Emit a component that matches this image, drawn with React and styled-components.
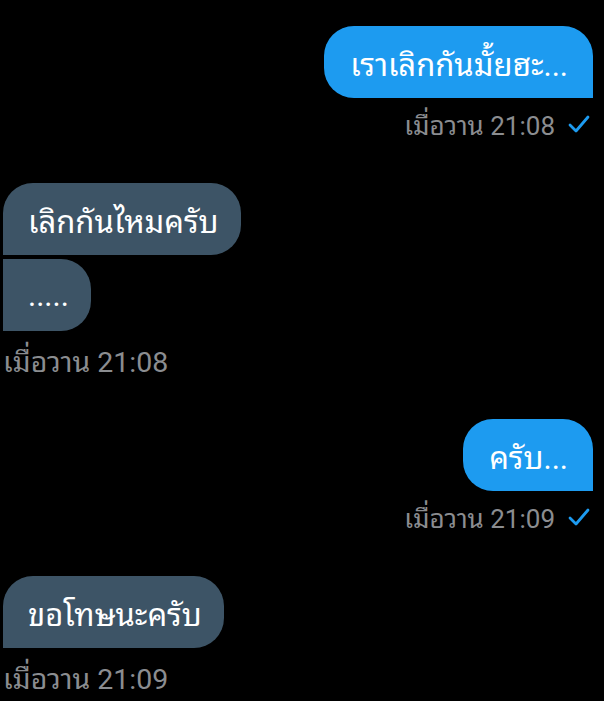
import styled, { createGlobalStyle } from 'styled-components'

const Global = createGlobalStyle`
  html, body {
    margin: 0;
    background: #000;
  }
  body {
    font-family: Roboto, "Noto Sans Thai Looped", "Noto Sans Thai UI", Loma, Garuda, "Noto Sans", sans-serif;
    -webkit-font-smoothing: antialiased;
  }
`

const messages = [
  { id: 1, mine: true, texts: ['เราเลิกกันมั้ยฮะ...'], time: 'เมื่อวาน 21:08' },
  { id: 2, mine: false, texts: ['เลิกกันไหมครับ', '.....'], time: 'เมื่อวาน 21:08' },
  { id: 3, mine: true, texts: ['ครับ...'], time: 'เมื่อวาน 21:09' },
  { id: 4, mine: false, texts: ['ขอโทษนะครับ'], time: 'เมื่อวาน 21:09' },
]

const Check = () => (
  <svg width="22" height="18" viewBox="0 0 22 18" fill="none">
    <path d="M2 10 L8 16 L20 2" stroke="#1d9bf0" strokeWidth="2.8" strokeLinecap="round" strokeLinejoin="round" />
  </svg>
)

const App = () => {
  return (
    <>
      <Global />
      <Thread>
        {messages.map(msg => (
          <Group key={msg.id} mine={msg.mine}>
            {msg.texts.map((text, i) => (
              <Bubble key={i} mine={msg.mine} first={i === 0}>{text}</Bubble>
            ))}
            <Meta mine={msg.mine}>
              <span>{msg.time}</span>
              {msg.mine && <Check />}
            </Meta>
          </Group>
        ))}
      </Thread>
    </>
  )
}

export default App

const Thread = styled.div`
  display: flex;
  flex-direction: column;
  gap: 45px;
  padding: 26px 11px 0 3px;
`

const Group = styled.div`
  display: flex;
  flex-direction: column;
  align-items: ${p => p.mine ? 'flex-end' : 'flex-start'};
  gap: 4px;
`

const Bubble = styled.div`
  box-sizing: border-box;
  height: 72px;
  display: flex;
  align-items: center;
  padding: 0 ${p => p.mine ? '25px' : '22px'} 0 ${p => p.mine ? '26px' : '25px'};
  font-size: 31px;
  color: #fff;
  white-space: nowrap;
  background: ${p => p.mine ? '#1d9bf0' : '#3d5466'};
  border-radius: ${p => p.mine
    ? '30px 30px 0 30px'
    : (p.first ? '30px 30px 30px 0' : '0 30px 30px 0')};
`

const Meta = styled.div`
  display: flex;
  align-items: center;
  gap: 13px;
  height: 30px;
  margin-top: ${p => p.mine ? '6px' : '9px'};
  margin-bottom: ${p => p.mine ? '0' : '0'};
  padding-right: ${p => p.mine ? '3px' : '0'};
  font-size: ${p => p.mine ? '26px' : '28.5px'};
  color: #8b8d90;

  svg {
    margin-top: 1px;
  }
`
